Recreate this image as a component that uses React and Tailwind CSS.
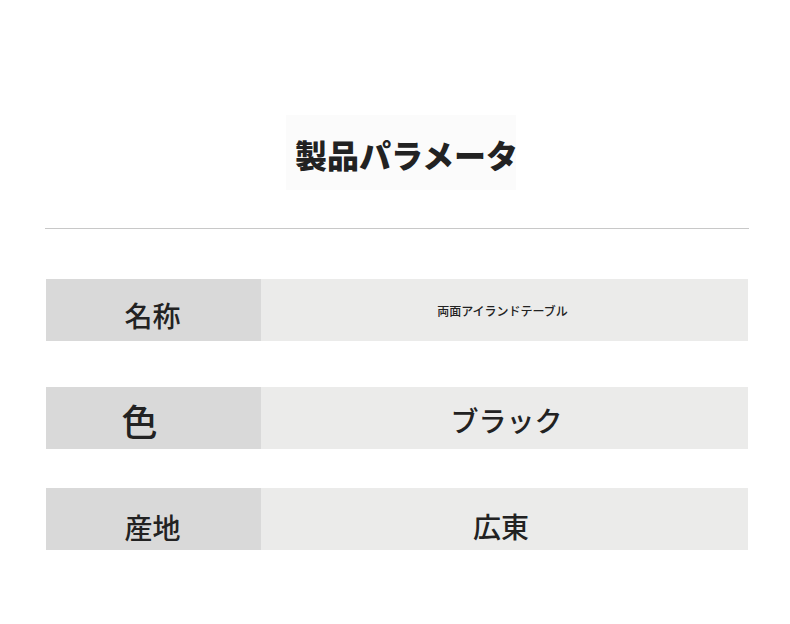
import React from 'react';

const rows = [
  {
    label: '名称',
    value: '両面アイランドテーブル',
    labelClass: 'text-[28px] pt-[10px] pr-[2px]',
    valueClass: 'text-[12px] pt-[2px] pr-[4px]',
    gap: 'mt-[50px]',
  },
  {
    label: '色',
    value: 'ブラック',
    labelClass: 'text-[36px] pt-[4px] pr-[28px]',
    valueClass: 'text-[28px] pt-[4px] pl-[4px]',
    gap: 'mt-[46px]',
  },
  {
    label: '産地',
    value: '広東',
    labelClass: 'text-[28px] pt-[16px] pr-[2px]',
    valueClass: 'text-[28px] pt-[14px] pr-[7px]',
    gap: 'mt-[39px]',
  },
];

const App = () => {
  return (
    <div
      className="w-[790px] h-[624px] bg-white text-[#222]"
      style={{ fontFamily: '"Noto Sans CJK JP", "Noto Sans", sans-serif' }}
    >
      <div className="flex justify-center pt-[115px] pl-[12px]">
        <div className="bg-[#fbfbfb] w-[230px] h-[75px] flex items-center justify-start pl-[9px]">
          <h1 className="text-[32px] font-black leading-none whitespace-nowrap pt-[3px]">
            製品パラメータ
          </h1>
        </div>
      </div>

      <div className="ml-[45px] w-[704px] h-px bg-[#c8c8c8] mt-[38px]" />

      <div className="ml-[46px] w-[702px]">
        {rows.map((row) => (
          <div key={row.label} className={`flex h-[62px] ${row.gap}`}>
            <div
              className={`w-[215px] bg-[#d9d9d9] flex items-center justify-center leading-none font-medium ${row.labelClass}`}
            >
              {row.label}
            </div>
            <div
              className={`flex-1 bg-[#ebebea] flex items-center justify-center leading-none font-medium ${row.valueClass}`}
            >
              {row.value}
            </div>
          </div>
        ))}
      </div>
    </div>
  );
};

export default App;
